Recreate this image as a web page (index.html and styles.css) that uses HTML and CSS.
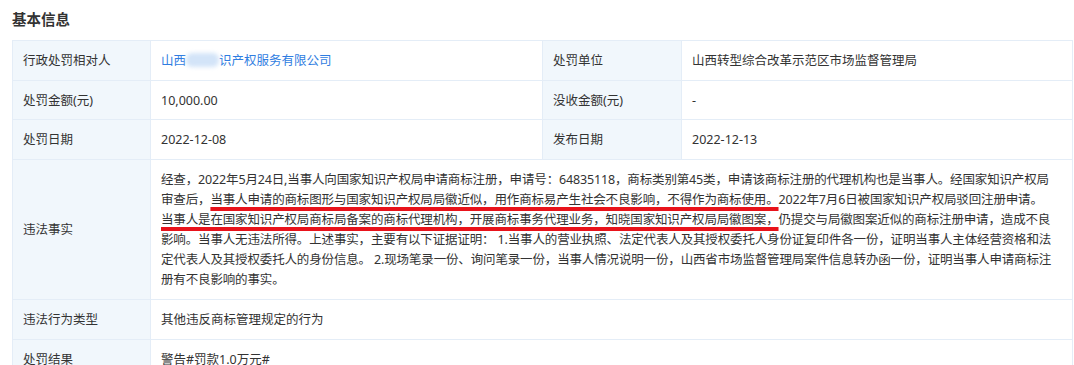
FILE: index.html
```html
<!DOCTYPE html>
<html lang="zh-CN">
<head>
<meta charset="utf-8">
<title>基本信息</title>
<link rel="stylesheet" href="styles.css">
</head>
<body>
<div class="page">
  <h2 class="title">基本信息</h2>
  <table class="info">
    <colgroup>
      <col class="c-label1">
      <col class="c-value1">
      <col class="c-label2">
      <col>
    </colgroup>
    <tbody>
      <tr>
        <th>行政处罚相对人</th>
        <td><a class="link" href="#">山西<span class="blur"></span>识产权服务有限公司</a></td>
        <th>处罚单位</th>
        <td>山西转型综合改革示范区市场监督管理局</td>
      </tr>
      <tr>
        <th>处罚金额(元)</th>
        <td>10,000.00</td>
        <th>没收金额(元)</th>
        <td>-</td>
      </tr>
      <tr>
        <th>处罚日期</th>
        <td>2022-12-08</td>
        <th>发布日期</th>
        <td>2022-12-13</td>
      </tr>
      <tr>
        <th>违法事实</th>
        <td colspan="3" class="long">经查，2022年5月24日,当事人向国家知识产权局申请商标注册，申请号：64835118，商标类别第45类，申请该商标注册的代理机构也是当事人。经国家知识产权局<br>审查后，<span class="mark">当事人申请的商标图形与国家知识产权局局徽近似，用作商标易产生社会不良影响，不得作为商标使用。</span>2022年7月6日被国家知识产权局驳回注册申请。<br><span class="mark">当事人是在国家知识产权局商标局备案的商标代理机构，开展商标事务代理业务，知晓国家知识产权局局徽图案，</span>仍提交与局徽图案近似的商标注册申请，造成不良<br>影响。当事人无违法所得。上述事实，主要有以下证据证明： 1.当事人的营业执照、法定代表人及其授权委托人身份证复印件各一份，证明当事人主体经营资格和法<br>定代表人及其授权委托人的身份信息。 2.现场笔录一份、询问笔录一份，当事人情况说明一份，山西省市场监督管理局案件信息转办函一份，证明当事人申请商标注<br>册有不良影响的事实。</td>
      </tr>
      <tr>
        <th>违法行为类型</th>
        <td colspan="3">其他违反商标管理规定的行为</td>
      </tr>
      <tr>
        <th>处罚结果</th>
        <td colspan="3">警告#罚款1.0万元#</td>
      </tr>
    </tbody>
  </table>
</div>
</body>
</html>
```

FILE: styles.css
```css
html, body {
  margin: 0;
  padding: 0;
  background: #ffffff;
}

body {
  font-family: "Noto Sans", "Noto Sans CJK SC", sans-serif;
  color: #333333;
  font-size: 12.5px;
  line-height: 19.7px;
}

.page {
  padding: 0 1px 0 12px;
}

.title {
  margin: 0;
  height: 40px;
  line-height: 38px;
  font-size: 14.5px;
  font-weight: 700;
  color: #333333;
}

.info {
  width: 100%;
  border-collapse: collapse;
  table-layout: fixed;
  border: 1px solid #e4edf7;
}

.c-label1 { width: 138px; }
.c-value1 { width: 392px; }
.c-label2 { width: 139px; }

.info th,
.info td {
  border: 1px solid #e4edf7;
  padding: 10px 10px 9px 10px;
  text-align: left;
  vertical-align: middle;
  font-weight: 400;
}

.info th {
  background: #f1f7fc;
}

.info td.long {
  padding-right: 0;
  line-height: 20px;
  letter-spacing: -0.15px;
  white-space: nowrap;
  overflow: hidden;
}

.link {
  color: #2f7de1;
  text-decoration: none;
}

.blur {
  display: inline-block;
  width: 33px;
  height: 14px;
  vertical-align: -2px;
  background: #d3e4f8;
  border-radius: 6px;
  filter: blur(2px);
}

.mark {
  text-decoration: underline;
  text-decoration-color: #e8131b;
  text-decoration-thickness: 3.5px;
  text-underline-offset: 3px;
}
```
